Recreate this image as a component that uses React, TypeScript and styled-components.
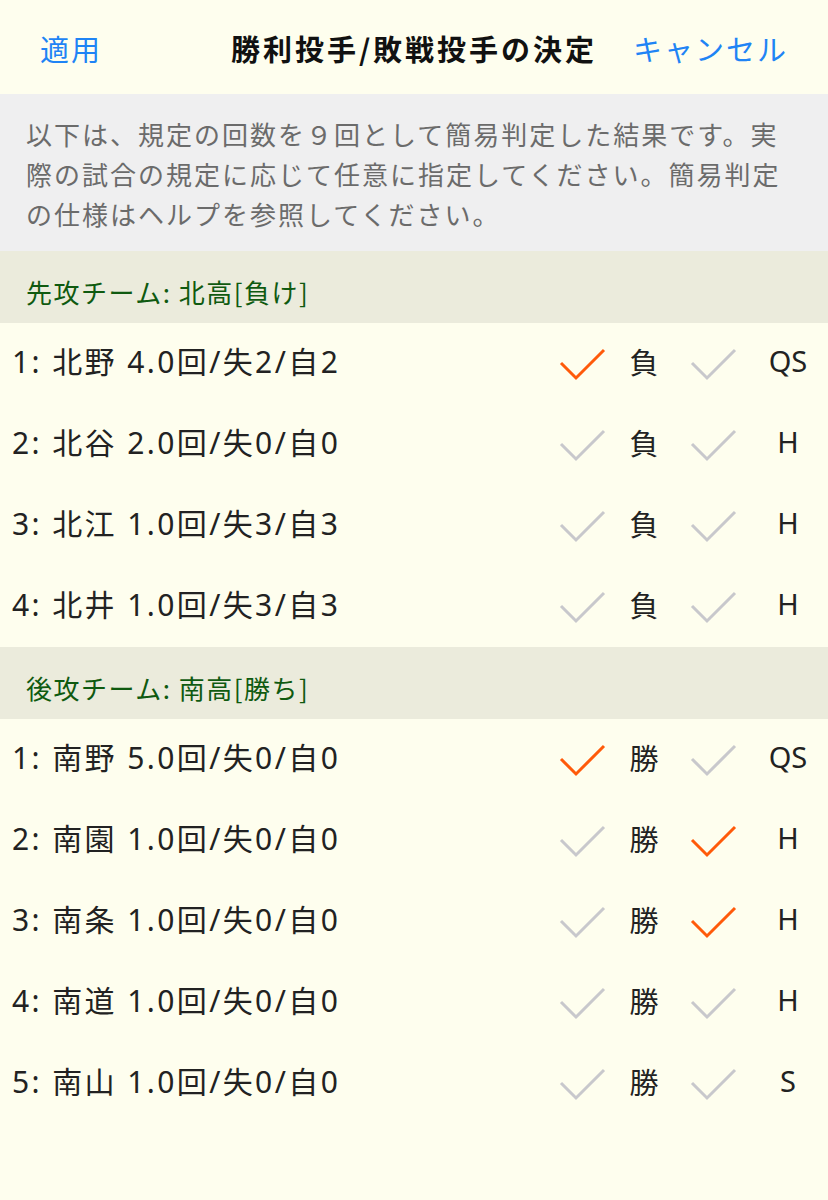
import React from "react";
import styled, { createGlobalStyle } from "styled-components";

const Global = createGlobalStyle`
  html, body { margin: 0; padding: 0; background: #fefeee; }
  body { font-family: "Noto Sans CJK JP", "Noto Sans", sans-serif; }
`;

const Page = styled.div`
  width: 828px;
  min-height: 1200px;
  background: #fefeee;
  color: #222;
`;

const NavBar = styled.div`
  height: 94px;
  display: flex;
  align-items: center;
  justify-content: space-between;
  padding: 2px 40px 0 40px;
  box-sizing: border-box;
  position: relative;
`;

const NavButton = styled.span`
  font-size: 29px;
  color: #1f84f5;
  letter-spacing: 2px;
  z-index: 1;
`;

const Title = styled.div`
  position: absolute;
  left: 0;
  right: 0;
  text-align: center;
  font-size: 29px;
  font-weight: 700;
  letter-spacing: 3px;
  color: #111;
  pointer-events: none;
`;

const Info = styled.div`
  background: #efeff0;
  padding: 20px 20px 17px 26px;
  font-size: 26px;
  line-height: 40px;
  letter-spacing: 2px;
  color: #6b6b6b;
`;

const SectionHeader = styled.div`
  height: 72px;
  background: #ebebdc;
  display: flex;
  align-items: flex-end;
  padding: 0 0 13px 26px;
  box-sizing: border-box;
  font-size: 26px;
  letter-spacing: 1.5px;
  color: #0f5a10;
`;

const Row = styled.div`
  height: 81px;
  display: flex;
  align-items: center;
  padding: 0 4px 0 12px;
  font-size: 30px;
  color: #222;
`;

const Name = styled.div`
  flex: 1;
  white-space: nowrap;
  font-family: "Noto Sans", "Noto Sans CJK JP", sans-serif;
  letter-spacing: 2.4px;
  padding-bottom: 7px;
`;

const CheckCell = styled.div<{ $w: number }>`
  width: ${(p) => p.$w}px;
  display: flex;
  justify-content: center;
  align-items: center;
`;

const Label = styled.div<{ $w: number }>`
  width: ${(p) => p.$w}px;
  text-align: center;
  font-size: 29px;
  font-family: "Noto Sans", "Noto Sans CJK JP", sans-serif;
  padding-bottom: 6px;
`;

const Check = ({ on }: { on: boolean }) => (
  <svg width="48" height="34" viewBox="0 0 48 34">
    <path
      d="M3 16 L18 31 L46 3"
      fill="none"
      stroke={on ? "#ff5a0a" : "#c8c8cc"}
      strokeWidth="3"
      strokeLinecap="butt"
      strokeLinejoin="miter"
    />
  </svg>
);

type Pitcher = { text: string; main: boolean; sub: boolean; kind: string };

const PitcherRow = ({ p, result }: { p: Pitcher; result: string }) => (
  <Row>
    <Name>{p.text}</Name>
    <CheckCell $w={64}>
      <Check on={p.main} />
    </CheckCell>
    <Label $w={60}>{result}</Label>
    <CheckCell $w={78}>
      <Check on={p.sub} />
    </CheckCell>
    <Label $w={72}>{p.kind}</Label>
  </Row>
);

const visitors: Pitcher[] = [
  { text: "1: 北野 4.0回/失2/自2", main: true, sub: false, kind: "QS" },
  { text: "2: 北谷 2.0回/失0/自0", main: false, sub: false, kind: "H" },
  { text: "3: 北江 1.0回/失3/自3", main: false, sub: false, kind: "H" },
  { text: "4: 北井 1.0回/失3/自3", main: false, sub: false, kind: "H" },
];

const home: Pitcher[] = [
  { text: "1: 南野 5.0回/失0/自0", main: true, sub: false, kind: "QS" },
  { text: "2: 南園 1.0回/失0/自0", main: false, sub: true, kind: "H" },
  { text: "3: 南条 1.0回/失0/自0", main: false, sub: true, kind: "H" },
  { text: "4: 南道 1.0回/失0/自0", main: false, sub: false, kind: "H" },
  { text: "5: 南山 1.0回/失0/自0", main: false, sub: false, kind: "S" },
];

export default function App() {
  return (
    <Page>
      <Global />
      <NavBar>
        <NavButton>適用</NavButton>
        <Title>勝利投手/敗戦投手の決定</Title>
        <NavButton>キャンセル</NavButton>
      </NavBar>
      <Info>
        以下は、規定の回数を９回として簡易判定した結果です。実
        <br />
        際の試合の規定に応じて任意に指定してください。簡易判定
        <br />
        の仕様はヘルプを参照してください。
      </Info>
      <SectionHeader>先攻チーム: 北高[負け]</SectionHeader>
      {visitors.map((p, i) => (
        <PitcherRow key={i} p={p} result="負" />
      ))}
      <SectionHeader>後攻チーム: 南高[勝ち]</SectionHeader>
      {home.map((p, i) => (
        <PitcherRow key={i} p={p} result="勝" />
      ))}
    </Page>
  );
}
